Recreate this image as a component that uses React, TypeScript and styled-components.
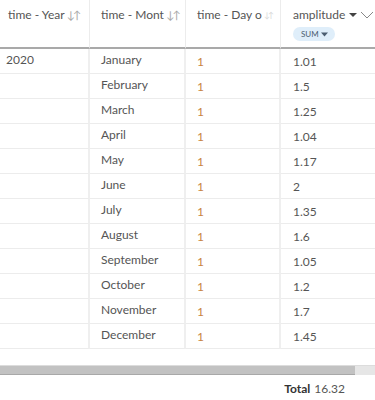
import React from "react";
import styled, { createGlobalStyle } from "styled-components";

const Global = createGlobalStyle`
  html, body { margin: 0; padding: 0; background: #fff; }
  body { font-family: Lato, "Open Sans", sans-serif; width: 375px; height: 400px; overflow: hidden; }
`;

const Wrap = styled.div`
  width: 375px;
  height: 400px;
  display: flex;
  flex-direction: column;
  overflow: hidden;
`;

const Table = styled.div`
  display: grid;
  grid-template-columns: 90px 96px 95px 94px;
`;

const HeadCell = styled.div<{ $last?: boolean }>`
  height: 49px;
  box-sizing: border-box;
  padding: 6px 0 0 ${(p) => (p.$last ? "12px" : "11px")};
  border-right: ${(p) => (p.$last ? "none" : "1px solid #ececec")};
  border-bottom: 2px solid #a9a9a9;
  font-size: 12px;
  color: #555;
  display: flex;
  flex-direction: column;
  gap: 3px;
  &:first-child { padding-left: 8px; }
`;

const HeadLabel = styled.div`
  display: flex;
  align-items: center;
  white-space: nowrap;
  line-height: 18px;
`;

const SortIcon = styled.span<{ $faint?: boolean }>`
  color: ${(p) => (p.$faint ? "#d8d8d8" : "#a8a8a8")};
  font-size: ${(p) => (p.$faint ? "8px" : "11px")};
  margin-left: 2px;
  letter-spacing: -2px;
`;

const Pill = styled.span`
  align-self: flex-start;
  background: #dfeefa;
  color: #4b5d70;
  border-radius: 7px;
  font-size: 8px;
  padding: 3px 7px 2px 8px;
  line-height: 9px;
  display: inline-flex;
  align-items: center;
  gap: 2px;
`;

const Cell = styled.div<{ $measure?: boolean; $color?: string; $first?: boolean; $last?: boolean }>`
  height: 25px;
  box-sizing: border-box;
  border-right: ${(p) => (p.$last ? "none" : "2px solid #efefef")};
  border-bottom: 1px solid #ececec;
  padding-left: ${(p) => (p.$first ? "6px" : p.$last ? "12px" : "11px")};
  padding-top: ${(p) => (p.$measure ? "5px" : "3px")};
  font-size: 12px;
  line-height: 16px;
  color: ${(p) => p.$color || "#555"};
  white-space: nowrap;
  overflow: hidden;
`;

const Spacer = styled.div`
  height: 16px;
`;

const ScrollTrack = styled.div`
  height: 10px;
  background: #e6e6e6;
  border-top: 1px solid #dcdcdc;
  box-sizing: border-box;
  display: flex;
`;

const ScrollThumb = styled.div`
  width: 355px;
  background: #c2c2c2;
  border-bottom: 1px solid #a8a8a8;
`;

const Footer = styled.div`
  display: flex;
  justify-content: flex-end;
  padding: 6px 30px 0 0;
  font-size: 12px;
  color: #555;
  line-height: 16px;
`;

const Bold = styled.span`
  font-weight: 700;
  color: #333;
  margin-right: 4px;
`;

const rows: [string, string][] = [
  ["January", "1.01"],
  ["February", "1.5"],
  ["March", "1.25"],
  ["April", "1.04"],
  ["May", "1.17"],
  ["June", "2"],
  ["July", "1.35"],
  ["August", "1.6"],
  ["September", "1.05"],
  ["October", "1.2"],
  ["November", "1.7"],
  ["December", "1.45"],
];

export default function App() {
  return (
    <Wrap>
      <Global />
      <Table>
        <HeadCell>
          <HeadLabel>
            time - Year<SortIcon>↓↑</SortIcon>
          </HeadLabel>
        </HeadCell>
        <HeadCell>
          <HeadLabel>
            time - Mont<SortIcon>↓↑</SortIcon>
          </HeadLabel>
        </HeadCell>
        <HeadCell>
          <HeadLabel>
            time - Day o<SortIcon $faint>↓↑</SortIcon>
          </HeadLabel>
        </HeadCell>
        <HeadCell $last>
          <HeadLabel>
            amplitude
            <svg width="12" height="10" viewBox="0 0 12 10" style={{ marginLeft: 3 }}>
              <path d="M1 3 L9 3 L5 7 Z" fill="#444" />
            </svg>
            <svg width="14" height="10" viewBox="0 0 14 10">
              <path d="M1 2 L7 8 L13 2" fill="none" stroke="#888" strokeWidth="1" />
            </svg>
          </HeadLabel>
          <Pill>
            SUM
            <svg width="7" height="5" viewBox="0 0 7 5">
              <path d="M0 0.5 L7 0.5 L3.5 4.5 Z" fill="#4b5d70" />
            </svg>
          </Pill>
        </HeadCell>
        {rows.map(([m, v], i) => (
          <React.Fragment key={m}>
            <Cell $first>{i === 0 ? "2020" : ""}</Cell>
            <Cell>{m}</Cell>
            <Cell $measure $color="#c8843f">1</Cell>
            <Cell $measure $last>{v}</Cell>
          </React.Fragment>
        ))}
      </Table>
      <Spacer />
      <ScrollTrack>
        <ScrollThumb />
      </ScrollTrack>
      <Footer>
        <Bold>Total</Bold>16.32
      </Footer>
    </Wrap>
  );
}
